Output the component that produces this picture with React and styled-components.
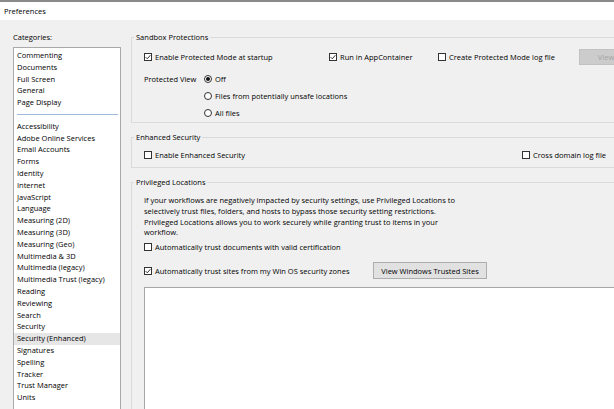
import styled, { createGlobalStyle } from 'styled-components';

const GlobalStyle = createGlobalStyle`
    html, body {
        margin: 0;
        padding: 0;
        overflow: hidden;
        background: #f0f0f0;
    }
    body {
        font-family: "Open Sans", "Noto Sans", sans-serif;
        font-size: 7.5px;
        color: #000000;
    }
`

const Window = styled.div`
    width: 700px;
    height: 409px;
    display: flex;
    flex-direction: column;
`

const TitleBar = styled.div`
    height: 18px;
    border-top: 2px solid #8a8a8a;
    background: #ffffff;
    padding-left: 4px;
    display: flex;
    align-items: center;
`

const Body = styled.div`
    flex: 1;
    display: flex;
    overflow: hidden;
`

const Sidebar = styled.div`
    width: 125px;
    flex-shrink: 0;
    box-sizing: border-box;
    padding: 11px 0 0 13px;
`

const SideLabel = styled.div`
    line-height: 12px;
    margin-bottom: 4px;
`

const List = styled.ul`
    list-style: none;
    margin: 0;
    width: 108px;
    height: 420px;
    box-sizing: border-box;
    padding: 2px 0 0;
    background: #ffffff;
    border: 1px solid #a9a9a9;
`

const Item = styled.li`
    height: 11.8px;
    line-height: 11.8px;
    padding-left: 3px;
    white-space: nowrap;
    background: ${({ $selected }) => $selected ? '#e6e6e6' : 'transparent'};
`

const Separator = styled.li`
    height: 11.8px;
    display: flex;
    align-items: center;
    padding: 0 2px 0 3px;
    &::after {
        content: '';
        flex: 1;
        height: 1px;
        background: #9fbbd9;
    }
`

const Main = styled.div`
    flex: 1;
    padding: 11px 0 0 6px;
    display: flex;
    flex-direction: column;
`

const Group = styled.fieldset`
    margin: ${({ $gap }) => $gap || 0}px 0 0;
    padding: ${({ $pt }) => $pt}px 0 ${({ $pb }) => $pb}px 12px;
    border: 1px solid #dadada;
    min-width: 0;
`

const Legend = styled.legend`
    padding: 0 2px;
    margin-left: -10px;
    line-height: 12px;
`

const TopRow = styled.div`
    display: grid;
    grid-template-columns: 185px 109px 141px auto;
    align-items: center;
    height: 18px;
`

const CheckLabel = styled.label`
    display: inline-flex;
    align-items: center;
    gap: 3px;
    height: 12px;
    white-space: nowrap;
`

const Box = styled.span`
    width: 8px;
    height: 8px;
    box-sizing: border-box;
    border: 1px solid #333333;
    background: #ffffff;
    display: inline-flex;
    align-items: center;
    justify-content: center;
`

const Round = styled(Box)`
    border-radius: 50%;
    &::after {
        content: '';
        width: 4px;
        height: 4px;
        border-radius: 50%;
        background: ${({ $on }) => $on ? '#111111' : 'transparent'};
    }
`

const ViewButton = styled.button`
    width: 60px;
    height: 16px;
    padding: 0;
    font: inherit;
    color: #a3a3a3;
    background: #cccccc;
    border: 1px solid #c2c2c2;
`

const ViewRow = styled.div`
    display: flex;
    margin-top: 7px;
`

const ViewLabel = styled.div`
    width: 60px;
    line-height: 12px;
`

const Radios = styled.div`
    display: flex;
    flex-direction: column;
    gap: 5px;
`

const EnhancedRow = styled.div`
    display: grid;
    grid-template-columns: 378px auto;
`

const Para = styled.p`
    margin: 0;
    line-height: 10.8px;
`

const CertRow = styled.div`
    margin-top: 3px;
`

const SitesRow = styled.div`
    display: flex;
    align-items: center;
    height: 17px;
    margin-top: 9px;
`

const SitesCheck = styled.div`
    width: 229px;
`

const PushButton = styled.button`
    width: 114px;
    height: 17px;
    padding: 0;
    font: inherit;
    color: #000000;
    background: #e1e1e1;
    border: 1px solid #adadad;
`

const WhiteBox = styled.div`
    margin-top: 8px;
    height: 200px;
    background: #ffffff;
    border: 1px solid #a6a6a6;
    border-right: none;
`

function Check({ checked, children }) {
    return (
        <CheckLabel>
            <Box>
                {checked && (
                    <svg width="6" height="6" viewBox="0 0 6 6">
                        <path d="M0.6 3.1 L2.3 4.8 L5.4 1.2" fill="none" stroke="#222" strokeWidth="0.9" />
                    </svg>
                )}
            </Box>
            {children}
        </CheckLabel>
    )
}

function Radio({ on, children }) {
    return (
        <CheckLabel>
            <Round $on={on} />
            {children}
        </CheckLabel>
    )
}

const topCategories = ['Commenting', 'Documents', 'Full Screen', 'General', 'Page Display'];
const categories = [
    'Accessibility', 'Adobe Online Services', 'Email Accounts', 'Forms', 'Identity', 'Internet',
    'JavaScript', 'Language', 'Measuring (2D)', 'Measuring (3D)', 'Measuring (Geo)',
    'Multimedia & 3D', 'Multimedia (legacy)', 'Multimedia Trust (legacy)', 'Reading',
    'Reviewing', 'Search', 'Security', 'Security (Enhanced)', 'Signatures', 'Spelling',
    'Tracker', 'Trust Manager', 'Units'
];

function App() {
    return (
        <Window>
            <GlobalStyle />
            <TitleBar>Preferences</TitleBar>
            <Body>
                <Sidebar>
                    <SideLabel>Categories:</SideLabel>
                    <List>
                        {topCategories.map((name) => <Item key={name}>{name}</Item>)}
                        <Separator />
                        {categories.map((name) => (
                            <Item key={name} $selected={name === 'Security (Enhanced)'}>{name}</Item>
                        ))}
                    </List>
                </Sidebar>

                <Main>
                    <Group $pt={5} $pb={3}>
                        <Legend>Sandbox Protections</Legend>
                        <TopRow>
                            <Check checked>Enable Protected Mode at startup</Check>
                            <Check checked>Run in AppContainer</Check>
                            <Check>Create Protected Mode log file</Check>
                            <ViewButton disabled>View...</ViewButton>
                        </TopRow>
                        <ViewRow>
                            <ViewLabel>Protected View</ViewLabel>
                            <Radios>
                                <Radio on>Off</Radio>
                                <Radio>Files from potentially unsafe locations</Radio>
                                <Radio>All files</Radio>
                            </Radios>
                        </ViewRow>
                    </Group>

                    <Group $gap={8} $pt={6} $pb={6}>
                        <Legend>Enhanced Security</Legend>
                        <EnhancedRow>
                            <Check>Enable Enhanced Security</Check>
                            <Check>Cross domain log file</Check>
                        </EnhancedRow>
                    </Group>

                    <Group $gap={8} $pt={7} $pb={0}>
                        <Legend>Privileged Locations</Legend>
                        <Para>
                            If your workflows are negatively impacted by security settings, use Privileged Locations to<br />
                            selectively trust files, folders, and hosts to bypass those security setting restrictions.<br />
                            Privileged Locations allows you to work securely while granting trust to items in your<br />
                            workflow.
                        </Para>
                        <CertRow>
                            <Check>Automatically trust documents with valid certification</Check>
                        </CertRow>
                        <SitesRow>
                            <SitesCheck>
                                <Check checked>Automatically trust sites from my Win OS security zones</Check>
                            </SitesCheck>
                            <PushButton>View Windows Trusted Sites</PushButton>
                        </SitesRow>
                        <WhiteBox />
                    </Group>
                </Main>
            </Body>
        </Window>
    )
}

export default App;
